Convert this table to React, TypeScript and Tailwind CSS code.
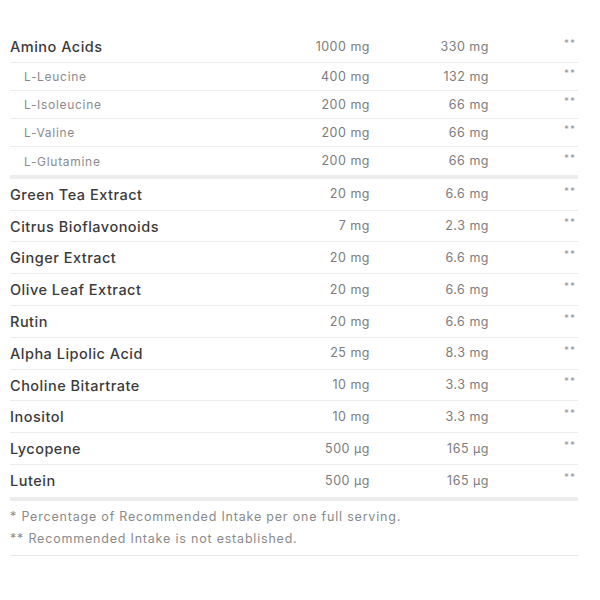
import React from "react";

type Row = { name: string; amount: string; ri: string; sub?: boolean };

const aminoRows: Row[] = [
  { name: "Amino Acids", amount: "1000 mg", ri: "330 mg" },
  { name: "L-Leucine", amount: "400 mg", ri: "132 mg", sub: true },
  { name: "L-Isoleucine", amount: "200 mg", ri: "66 mg", sub: true },
  { name: "L-Valine", amount: "200 mg", ri: "66 mg", sub: true },
  { name: "L-Glutamine", amount: "200 mg", ri: "66 mg", sub: true },
];

const otherRows: Row[] = [
  { name: "Green Tea Extract", amount: "20 mg", ri: "6.6 mg" },
  { name: "Citrus Bioflavonoids", amount: "7 mg", ri: "2.3 mg" },
  { name: "Ginger Extract", amount: "20 mg", ri: "6.6 mg" },
  { name: "Olive Leaf Extract", amount: "20 mg", ri: "6.6 mg" },
  { name: "Rutin", amount: "20 mg", ri: "6.6 mg" },
  { name: "Alpha Lipolic Acid", amount: "25 mg", ri: "8.3 mg" },
  { name: "Choline Bitartrate", amount: "10 mg", ri: "3.3 mg" },
  { name: "Inositol", amount: "10 mg", ri: "3.3 mg" },
  { name: "Lycopene", amount: "500 µg", ri: "165 µg" },
  { name: "Lutein", amount: "500 µg", ri: "165 µg" },
];

function TableRow({ row, last }: { row: Row; last: boolean }) {
  return (
    <div
      className={`flex items-center ${row.sub ? "h-[28px] pt-[2px]" : "h-[31.8px] pt-[1px]"} ${
        last ? "" : "border-b border-[#ececec]"
      }`}
    >
      <div
        className={
          row.sub
            ? "flex-1 pl-[14px] text-[12px] tracking-[0.7px] text-[#8c8c8c]"
            : "flex-1 text-[14.5px] font-medium tracking-[0.5px] text-[#3b3b3b]"
        }
      >
        {row.name}
      </div>
      <div className="w-[120px] text-right text-[12.5px] tracking-[0.5px] text-[#7c7c7c]">
        {row.amount}
      </div>
      <div className="w-[119px] text-right text-[12.5px] tracking-[0.5px] text-[#7c7c7c]">
        {row.ri}
      </div>
      <div className="w-[89px] pr-[2px] text-right text-[10px] leading-none tracking-[1px] text-[#999999] -translate-y-[4px]">
        **
      </div>
    </div>
  );
}

export default function App() {
  return (
    <div
      className="w-[600px] h-[600px] bg-white pt-[31px]"
      style={{ fontFamily: "Inter, 'Noto Sans', sans-serif" }}
    >
      <div className="ml-[10px] w-[568px]">
        {aminoRows.map((r, i) => (
          <TableRow key={r.name} row={r} last={i === aminoRows.length - 1} />
        ))}
        <div className="h-[4px] bg-[#ededed]" />
        {otherRows.map((r, i) => (
          <TableRow key={r.name} row={r} last={i === otherRows.length - 1} />
        ))}
        <div className="h-[4px] bg-[#ededed]" />
        <div className="pt-[5px] pb-[5px] border-b border-[#e6e6e6] text-[12.5px] tracking-[0.8px] text-[#8a8a8a] leading-[22px]">
          <p>* Percentage of Recommended Intake per one full serving.</p>
          <p>** Recommended Intake is not established.</p>
        </div>
      </div>
    </div>
  );
}
